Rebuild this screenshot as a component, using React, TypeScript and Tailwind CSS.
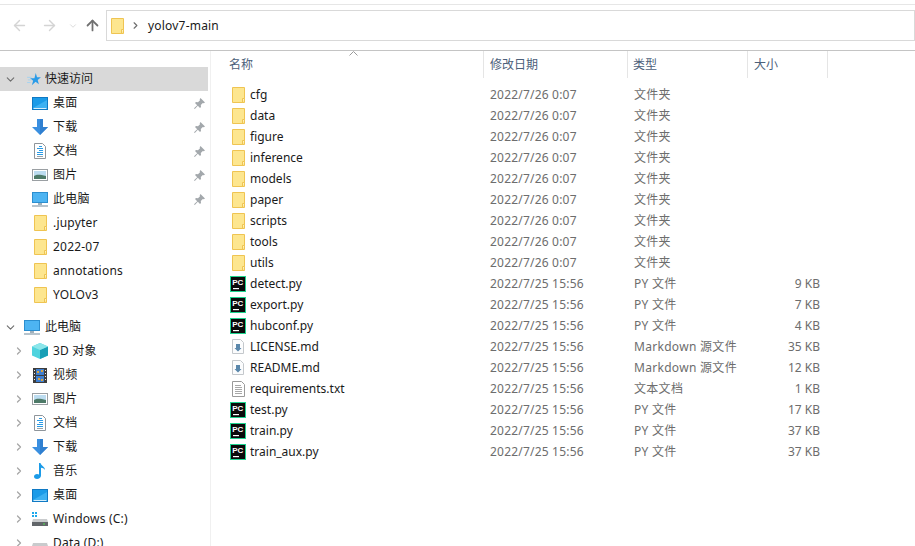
import { ArrowLeft, ArrowRight, ArrowUp, ChevronDown, ChevronRight } from 'lucide-react';
import type { ReactNode } from 'react';

const FONT = 'font-["Noto_Sans","Noto_Sans_CJK_SC",sans-serif]';

function FolderIcon() {
  return (
    <svg width="13" height="16" viewBox="0 0 13 16">
      <path d="M.5.500h12v15H.5z" fill="#fde68f" stroke="#efc452" />
      <path d="M10.500 15.500v-4h2" fill="#fff3c4" stroke="#efc452" />
    </svg>
  );
}

function PcIcon() {
  return (
    <svg width="16" height="16" viewBox="0 0 16 16">
      <rect x=".5" y=".5" width="15" height="15" fill="#0b0b0b" stroke="#1fd48f" />
      <rect x="3" y="12" width="6" height="1.200" fill="#fff" />
      <text x="2.200" y="9" fill="#fff" fontSize="8" fontWeight="700" fontFamily="Liberation Sans, sans-serif">PC</text>
    </svg>
  );
}

function MdIcon() {
  return (
    <svg width="12" height="15" viewBox="0 0 12 15">
      <path d="M.5.5h8l3 3v11H.5z" fill="#fbfcfd" stroke="#c4c8cc" />
      <path d="M4 5h4v4h1.500L6 12.500 2.500 9H4z" fill="#5a87ab" />
    </svg>
  );
}

function TxtIcon() {
  return (
    <svg width="13" height="16" viewBox="0 0 13 16">
      <path d="M.5.5h9l3 3v12H.5z" fill="#fff" stroke="#9a9a9a" />
      <path d="M3 4.500h6M3 6.500h7M3 8.500h7M3 10.500h7M3 12.500h7" stroke="#a8a8a8" />
    </svg>
  );
}

function DesktopIcon() {
  return (
    <svg width="16" height="13" viewBox="0 0 16 13">
      <rect x=".5" y=".5" width="15" height="12" fill="#1b9be8" stroke="#0f79c4" />
      <path d="M1 11 15 3v8z" fill="#3db1f2" />
      <path d="M1.500 11.500h13" stroke="#d7effc" />
    </svg>
  );
}

function DownloadIcon() {
  return (
    <svg width="16" height="16" viewBox="0 0 16 16">
      <path d="M5 0h6v8h5l-8 8-8-8h5z" fill="#3a8fe0" />
      <path d="M8 0h3v8h5l-8 8z" fill="#2f7fd0" />
    </svg>
  );
}

function DocIcon() {
  return (
    <svg width="12" height="16" viewBox="0 0 12 16">
      <path d="M.5.5h8l3 3v12H.5z" fill="#fff" stroke="#8e959b" />
      <path d="M5 3.500h3M3 5.500h6M5 7.500h4M3 9.500h6M3 11.500h6" stroke="#2b9be6" />
      <path d="M3 13.500h6" stroke="#9ba3a8" />
    </svg>
  );
}

function PictureIcon() {
  return (
    <svg width="16" height="12" viewBox="0 0 16 12">
      <rect x=".5" y=".5" width="15" height="11" fill="#fff" stroke="#9a9fa3" />
      <rect x="2" y="2" width="12" height="8" fill="#bcdcf0" />
      <path d="M2 7c3-2 6-1.500 12 0v3H2z" fill="#4d7a68" />
    </svg>
  );
}

function PcMonitorIcon() {
  return (
    <svg width="16" height="15" viewBox="0 0 16 15">
      <rect x=".5" y=".5" width="15" height="10" fill="#4db4f2" stroke="#2b8ecf" />
      <path d="M6 11h4v2H6z" fill="#9fb0bc" />
      <path d="M0 14h16" stroke="#9fb0bc" strokeWidth="1.500" />
    </svg>
  );
}

function CubeIcon() {
  return (
    <svg width="16" height="16" viewBox="0 0 16 16">
      <path d="M8 0 16 3.500v9L8 16 0 12.500v-9z" fill="#4fd3de" />
      <path d="M8 7v9l8-3.500v-9z" fill="#189fb6" />
      <path d="M8 0 16 3.500 8 7 0 3.500z" fill="#8ce6ea" />
    </svg>
  );
}

function FilmIcon() {
  return (
    <svg width="14" height="15" viewBox="0 0 14 15">
      <rect width="14" height="15" fill="#3d3d3d" />
      <rect x="3" y="1" width="8" height="6" fill="#3f7fd0" />
      <rect x="3" y="8" width="8" height="6" fill="#3f7fd0" />
      <path d="M4 3h2v2H4zM8 2h2v2H8zM5 10h2v2H5zM8 11h2v2H8z" fill="#d9a441" />
      <path d="M1 2h1v1H1zM1 5h1v1H1zM1 8h1v1H1zM1 11h1v1H1zM12 2h1v1h-1zM12 5h1v1h-1zM12 8h1v1h-1zM12 11h1v1h-1z" fill="#eee" />
    </svg>
  );
}

function MusicIcon() {
  return (
    <svg width="12" height="16" viewBox="0 0 12 16">
      <path d="M5 0h1.500c.5 3 4.500 3.500 4.500 7-1-1.500-2.500-2-4-2.200V12.500C7 14.500 5 16 3 16s-3-1-3-2.500S1.500 11 3 11c.8 0 1.500.2 2 .6z" fill="#1b9be8" />
    </svg>
  );
}

function DriveIcon({ windows }: { windows?: boolean }) {
  return (
    <svg width="16" height="14" viewBox="0 0 16 14">
      {windows && <path d="M0 0h2v2H0zM3 0h2v2H3zM0 3h2v2H0zM3 3h2v2H3z" fill="#1ca8ec" />}
      <path d="M1 7h14l1 3v4H0v-4z" fill="#c9cbcd" />
      <rect y="10" width="16" height="4" fill="#62666a" />
      <rect x="11" y="11.500" width="2" height="1" fill="#4ee04e" />
    </svg>
  );
}

function StarIcon() {
  return (
    <svg width="14" height="13" viewBox="0 0 16 15">
      <path d="M10 0l1.500 4.800L16 5l-3.700 3 1.300 5-3.800-2.800L5.500 14 7 9 3.500 6h5z" fill="#2a9be8" />
      <path d="M0 5h5M1 8h4M0 11h4" stroke="#9fd2f2" />
    </svg>
  );
}

function PinIcon() {
  return (
    <svg width="11" height="11" viewBox="0 0 11 11">
      <path d="M6.500 0 11 4.500 9.800 5.300 8.800 5 6.800 7l.2 2-1 1-2.200-2.200L.8 11 0 10.200l3.200-3L1 5l1-1 2 .2 2-2-.3-1z" fill="#a3a8ac" />
    </svg>
  );
}

type NavProps = {
  icon: ReactNode;
  label: string;
  pinned?: boolean;
  chevron?: boolean;
};

function NavRow({ icon, label, pinned, chevron }: NavProps) {
  return (
    <div className="flex h-6 items-center">
      <div className="flex w-[32px] shrink-0 items-center pl-[13px]">
        {chevron && <ChevronRight size={12} strokeWidth={2.500} className="text-[#a6a6a6]" />}
      </div>
      <div className="flex w-[16px] shrink-0 items-center justify-center">{icon}</div>
      <span className="ml-[5px] text-[12px] tracking-[0.2px] text-[#1a1a1a]">{label}</span>
      {pinned && (
        <span className="ml-auto mr-[4px]">
          <PinIcon />
        </span>
      )}
    </div>
  );
}

const quickAccess: NavProps[] = [
  { icon: <DesktopIcon />, label: '桌面', pinned: true },
  { icon: <DownloadIcon />, label: '下载', pinned: true },
  { icon: <DocIcon />, label: '文档', pinned: true },
  { icon: <PictureIcon />, label: '图片', pinned: true },
  { icon: <PcMonitorIcon />, label: '此电脑', pinned: true },
  { icon: <FolderIcon />, label: '.jupyter' },
  { icon: <FolderIcon />, label: '2022-07' },
  { icon: <FolderIcon />, label: 'annotations' },
  { icon: <FolderIcon />, label: 'YOLOv3' },
];

const thisPc: NavProps[] = [
  { icon: <CubeIcon />, label: '3D 对象', chevron: true },
  { icon: <FilmIcon />, label: '视频', chevron: true },
  { icon: <PictureIcon />, label: '图片', chevron: true },
  { icon: <DocIcon />, label: '文档', chevron: true },
  { icon: <DownloadIcon />, label: '下载', chevron: true },
  { icon: <MusicIcon />, label: '音乐', chevron: true },
  { icon: <DesktopIcon />, label: '桌面', chevron: true },
  { icon: <DriveIcon windows />, label: 'Windows (C:)', chevron: true },
  { icon: <DriveIcon />, label: 'Data (D:)', chevron: true },
];

const FOLDER_DATE = '2022/7/26 0:07';
const FILE_DATE = '2022/7/25 15:56';

const files = [
  { name: 'cfg', kind: 'folder', date: FOLDER_DATE, type: '文件夹', size: '' },
  { name: 'data', kind: 'folder', date: FOLDER_DATE, type: '文件夹', size: '' },
  { name: 'figure', kind: 'folder', date: FOLDER_DATE, type: '文件夹', size: '' },
  { name: 'inference', kind: 'folder', date: FOLDER_DATE, type: '文件夹', size: '' },
  { name: 'models', kind: 'folder', date: FOLDER_DATE, type: '文件夹', size: '' },
  { name: 'paper', kind: 'folder', date: FOLDER_DATE, type: '文件夹', size: '' },
  { name: 'scripts', kind: 'folder', date: FOLDER_DATE, type: '文件夹', size: '' },
  { name: 'tools', kind: 'folder', date: FOLDER_DATE, type: '文件夹', size: '' },
  { name: 'utils', kind: 'folder', date: FOLDER_DATE, type: '文件夹', size: '' },
  { name: 'detect.py', kind: 'py', date: FILE_DATE, type: 'PY 文件', size: '9 KB' },
  { name: 'export.py', kind: 'py', date: FILE_DATE, type: 'PY 文件', size: '7 KB' },
  { name: 'hubconf.py', kind: 'py', date: FILE_DATE, type: 'PY 文件', size: '4 KB' },
  { name: 'LICENSE.md', kind: 'md', date: FILE_DATE, type: 'Markdown 源文件', size: '35 KB' },
  { name: 'README.md', kind: 'md', date: FILE_DATE, type: 'Markdown 源文件', size: '12 KB' },
  { name: 'requirements.txt', kind: 'txt', date: FILE_DATE, type: '文本文档', size: '1 KB' },
  { name: 'test.py', kind: 'py', date: FILE_DATE, type: 'PY 文件', size: '17 KB' },
  { name: 'train.py', kind: 'py', date: FILE_DATE, type: 'PY 文件', size: '37 KB' },
  { name: 'train_aux.py', kind: 'py', date: FILE_DATE, type: 'PY 文件', size: '37 KB' },
];

function FileIcon({ kind }: { kind: string }) {
  if (kind === 'folder') return <FolderIcon />;
  if (kind === 'py') return <PcIcon />;
  if (kind === 'md') return <MdIcon />;
  return <TxtIcon />;
}

function HeaderCell({ label, className }: { label: string; className: string }) {
  return (
    <div className={`flex h-[27px] items-center border-r border-[#e5e5e5] text-[12px] text-[#4c607a] ${className}`}>
      {label}
    </div>
  );
}

export default function App() {
  return (
    <div className={`flex h-[546px] w-[915px] flex-col overflow-hidden bg-white ${FONT}`}>
      {/* toolbar */}
      <div className="h-[51px] shrink-0 border-b border-[#c4c4c4]">
        <div className="mt-[4px] h-px bg-[#e6e6e6]" />
        <div className="mt-[5px] flex h-[30px] items-center pt-[1px]">
          <div className="flex w-[106px] items-center pl-[11px]">
            <ArrowLeft size={17} strokeWidth={2} className="text-[#d4d4d4]" />
            <ArrowRight size={17} strokeWidth={2} className="ml-[13px] text-[#d4d4d4]" />
            <ChevronDown size={10} strokeWidth={2} className="ml-[10px] text-[#d4d4d4]" />
            <ArrowUp size={17} strokeWidth={2.500} className="ml-[6px] text-[#707070]" />
          </div>
          <div className="flex h-[31px] flex-1 items-center border border-[#d9d9d9] pl-[4px]">
            <FolderIcon />
            <ChevronRight size={11} strokeWidth={2.500} className="ml-[6px] text-[#6d6d6d]" />
            <span className="ml-[7px] text-[12px] tracking-[0.2px] text-[#1a1a1a]">yolov7-main</span>
          </div>
        </div>
      </div>

      <div className="flex min-h-0 flex-1">
        {/* nav pane */}
        <div className="w-[211px] shrink-0 border-r border-[#f0f0f0] pt-[16px]">
          <div className="flex h-6 w-[208px] items-center bg-[#d9d9d9]">
            <div className="flex w-[27px] shrink-0 items-center pl-[4px]">
              <ChevronDown size={13} strokeWidth={2} className="text-[#6d6d6d]" />
            </div>
            <StarIcon />
            <span className="ml-[4px] text-[12px] text-[#1a1a1a]">快速访问</span>
          </div>
          <div className="pr-[1px]">
            {quickAccess.map((item) => (
              <NavRow key={item.label} {...item} />
            ))}
          </div>
          <div className="mt-[8px] flex h-6 items-center">
            <div className="flex w-[24px] shrink-0 items-center pl-[4px]">
              <ChevronDown size={13} strokeWidth={2} className="text-[#6d6d6d]" />
            </div>
            <PcMonitorIcon />
            <span className="ml-[5px] text-[12px] text-[#1a1a1a]">此电脑</span>
          </div>
          {thisPc.map((item) => (
            <NavRow key={item.label} {...item} />
          ))}
        </div>

        {/* file list */}
        <div className="relative min-w-0 flex-1">
          <svg width="9" height="5" viewBox="0 0 9 5" className="absolute left-[138px] top-0">
            <path d="M.5 4.500 4.500.5l4 4" fill="none" stroke="#9a9a9a" />
          </svg>
          <div className="flex">
            <HeaderCell label="名称" className="w-[273px] pl-[18px]" />
            <HeaderCell label="修改日期" className="w-[144px] pl-[6px]" />
            <HeaderCell label="类型" className="w-[120px] pl-[5px]" />
            <HeaderCell label="大小" className="w-[80px] pl-[6px]" />
          </div>
          <div className="pt-[6px]">
            {files.map((f) => (
              <div key={f.name} className="flex h-[21px] items-center text-[12px]">
                <div className="flex w-[273px] items-center pl-[19px]">
                  <div className="flex w-[16px] justify-center">
                    <FileIcon kind={f.kind} />
                  </div>
                  <span className="ml-[4px] text-[#1a1a1a]">{f.name}</span>
                </div>
                <div className="w-[144px] pl-[6px] tracking-[0.2px] text-[#6d6d6d]">{f.date}</div>
                <div className="w-[120px] pl-[6px] tracking-[0.3px] text-[#6d6d6d]">{f.type}</div>
                <div className="w-[72px] text-right text-[#6d6d6d]">{f.size}</div>
              </div>
            ))}
          </div>
        </div>
      </div>
    </div>
  );
}
